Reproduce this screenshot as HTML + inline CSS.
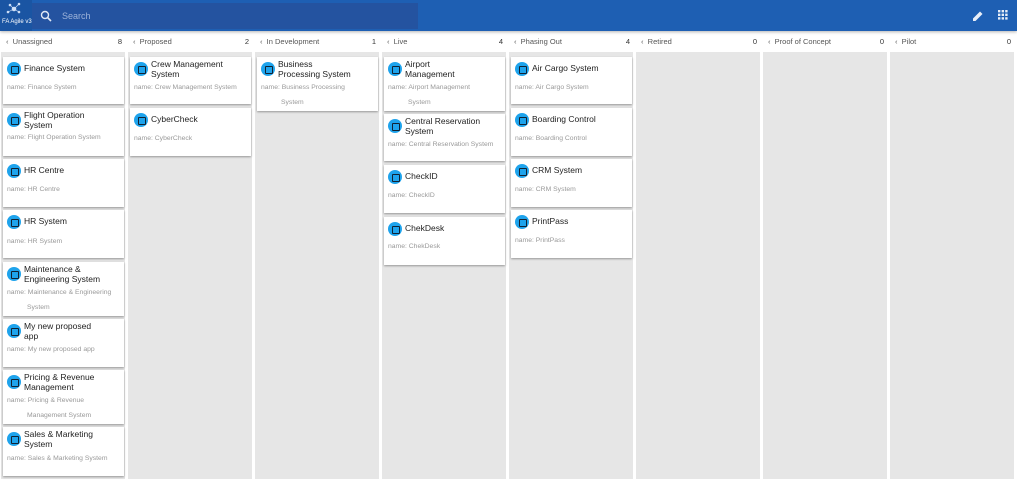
<!DOCTYPE html>
<html><head><meta charset="utf-8"><style>
*{box-sizing:border-box;margin:0;padding:0}
body{width:1017px;height:486px;overflow:hidden;background:#fff;font-family:"Liberation Sans",Arial,sans-serif;position:relative}
.top{position:absolute;left:0;top:0;width:1017px;height:31px;background:#1e5fb3;box-shadow:0 1px 3px rgba(0,0,0,.3)}
.logo{position:absolute;left:0;top:0;width:32px;height:31px;background:#1a55a3}
.search{position:absolute;left:32px;top:3px;width:386px;height:26px;background:#2453a0}
.search span{position:absolute;left:30px;top:8px;font-size:9px;color:#9db3d9}
.hdr{position:absolute;top:32px;height:19px;font-size:7.5px;color:#555;line-height:19px}
.hdr .c{position:absolute;right:2px;top:0;color:#333}
.col{position:absolute;top:52px;width:124px;height:427px;background:#e6e6e6}
.card{position:absolute;left:2px;width:121px;background:#fff;box-shadow:0 1px 2px rgba(0,0,0,.35)}
.ic{position:absolute;left:4px;top:5px;width:14px;height:14px;border-radius:50%;background:#1ea3ec}
.ic:after{content:"";position:absolute;left:3.5px;top:3.5px;width:6px;height:6px;border:1px solid #123;border-radius:1px}
.t{position:absolute;left:21px;top:5px;font-size:8.5px;line-height:10px;color:#222}
.n{position:absolute;left:4px;font-size:6.8px;color:#999;line-height:10px}
.n2{position:absolute;left:24px;font-size:6.8px;color:#999}
</style></head><body>
<div class="top">
<div class="logo"><svg width="32" height="31"><g fill="#cfe0f7" stroke="#cfe0f7" stroke-width=".6"><circle cx="14" cy="9" r="2"/><circle cx="10" cy="5" r="1"/><circle cx="19" cy="4" r="1"/><circle cx="8" cy="12" r="1"/><circle cx="19" cy="12" r="1"/><line x1="14" y1="9" x2="10" y2="5"/><line x1="14" y1="9" x2="19" y2="4"/><line x1="14" y1="9" x2="8" y2="12"/><line x1="14" y1="9" x2="19" y2="12"/></g><text x="2" y="23" font-size="6" fill="#fff" font-family="Liberation Sans">FA Agile v3</text></svg></div>
<div class="search"><svg style="position:absolute;left:8px;top:7px" width="12" height="12"><circle cx="5" cy="5" r="3.5" fill="none" stroke="#e0e8f5" stroke-width="1.4"/><line x1="7.5" y1="7.5" x2="11" y2="11" stroke="#e0e8f5" stroke-width="1.6"/></svg><span>Search</span></div>
<svg style="position:absolute;left:972px;top:10px" width="12" height="12"><path d="M1 11 L1 8.5 L8 1.5 L10.5 4 L3.5 11 Z" fill="#e8eef8"/></svg>
<svg style="position:absolute;left:998px;top:10px" width="10" height="10" fill="#e8eef8"><rect x="0" y="0" width="2.4" height="2.4"/><rect x="3.6" y="0" width="2.4" height="2.4"/><rect x="7.2" y="0" width="2.4" height="2.4"/><rect x="0" y="3.6" width="2.4" height="2.4"/><rect x="3.6" y="3.6" width="2.4" height="2.4"/><rect x="7.2" y="3.6" width="2.4" height="2.4"/><rect x="0" y="7.2" width="2.4" height="2.4"/><rect x="3.6" y="7.2" width="2.4" height="2.4"/><rect x="7.2" y="7.2" width="2.4" height="2.4"/></svg>
</div>

<div class="hdr" style="left:6px;width:118px">‹&nbsp; Unassigned<span class="c">8</span></div>
<div class="hdr" style="left:133px;width:118px">‹&nbsp; Proposed<span class="c">2</span></div>
<div class="hdr" style="left:260px;width:118px">‹&nbsp; In Development<span class="c">1</span></div>
<div class="hdr" style="left:387px;width:118px">‹&nbsp; Live<span class="c">4</span></div>
<div class="hdr" style="left:514px;width:118px">‹&nbsp; Phasing Out<span class="c">4</span></div>
<div class="hdr" style="left:641px;width:118px">‹&nbsp; Retired<span class="c">0</span></div>
<div class="hdr" style="left:768px;width:118px">‹&nbsp; Proof of Concept<span class="c">0</span></div>
<div class="hdr" style="left:895px;width:118px">‹&nbsp; Pilot<span class="c">0</span></div>

<div class="col" style="left:1px">
<div class="card" style="top:5px;height:47px"><div class="ic"></div><div class="t" style="top:6px">Finance System</div><div class="n" style="top:26px">name: Finance System</div></div>
<div class="card" style="top:56px;height:48px"><div class="ic"></div><div class="t" style="top:2px">Flight Operation<br>System</div><div class="n" style="top:25px">name: Flight Operation System</div></div>
<div class="card" style="top:107px;height:48px"><div class="ic"></div><div class="t" style="top:6px">HR Centre</div><div class="n" style="top:26px">name: HR Centre</div></div>
<div class="card" style="top:158px;height:48px"><div class="ic"></div><div class="t" style="top:6px">HR System</div><div class="n" style="top:27px">name: HR System</div></div>
<div class="card" style="top:210px;height:54px"><div class="ic"></div><div class="t" style="top:2px">Maintenance &amp;<br>Engineering System</div><div class="n" style="top:26px">name: Maintenance &amp; Engineering</div><div class="n2" style="top:42px">System</div></div>
<div class="card" style="top:267px;height:48px"><div class="ic"></div><div class="t" style="top:2px">My new proposed<br>app</div><div class="n" style="top:26px">name: My new proposed app</div></div>
<div class="card" style="top:318px;height:54px"><div class="ic"></div><div class="t" style="top:2px">Pricing &amp; Revenue<br>Management</div><div class="n" style="top:26px">name: Pricing &amp; Revenue</div><div class="n2" style="top:42px">Management System</div></div>
<div class="card" style="top:375px;height:49px"><div class="ic"></div><div class="t" style="top:2px">Sales &amp; Marketing<br>System</div><div class="n" style="top:27px">name: Sales &amp; Marketing System</div></div>
</div>

<div class="col" style="left:128px">
<div class="card" style="top:5px;height:47px"><div class="ic"></div><div class="t" style="top:2px">Crew Management<br>System</div><div class="n" style="top:26px">name: Crew Management System</div></div>
<div class="card" style="top:56px;height:48px"><div class="ic"></div><div class="t" style="top:6px">CyberCheck</div><div class="n" style="top:26px">name: CyberCheck</div></div>
</div>

<div class="col" style="left:255px">
<div class="card" style="top:5px;height:54px"><div class="ic"></div><div class="t" style="top:2px">Business<br>Processing System</div><div class="n" style="top:26px">name: Business Processing</div><div class="n2" style="top:42px">System</div></div>
</div>

<div class="col" style="left:382px">
<div class="card" style="top:5px;height:54px"><div class="ic"></div><div class="t" style="top:2px">Airport<br>Management</div><div class="n" style="top:26px">name: Airport Management</div><div class="n2" style="top:42px">System</div></div>
<div class="card" style="top:62px;height:47px"><div class="ic"></div><div class="t" style="top:2px">Central Reservation<br>System</div><div class="n" style="top:26px">name: Central Reservation System</div></div>
<div class="card" style="top:113px;height:48px"><div class="ic"></div><div class="t" style="top:6px">CheckID</div><div class="n" style="top:26px">name: CheckID</div></div>
<div class="card" style="top:165px;height:48px"><div class="ic"></div><div class="t" style="top:6px">ChekDesk</div><div class="n" style="top:25px">name: ChekDesk</div></div>
</div>

<div class="col" style="left:509px">
<div class="card" style="top:5px;height:47px"><div class="ic"></div><div class="t" style="top:6px">Air Cargo System</div><div class="n" style="top:26px">name: Air Cargo System</div></div>
<div class="card" style="top:56px;height:48px"><div class="ic"></div><div class="t" style="top:6px">Boarding Control</div><div class="n" style="top:26px">name: Boarding Control</div></div>
<div class="card" style="top:107px;height:48px"><div class="ic"></div><div class="t" style="top:6px">CRM System</div><div class="n" style="top:26px">name: CRM System</div></div>
<div class="card" style="top:158px;height:48px"><div class="ic"></div><div class="t" style="top:6px">PrintPass</div><div class="n" style="top:26px">name: PrintPass</div></div>
</div>

<div class="col" style="left:636px"></div>
<div class="col" style="left:763px"></div>
<div class="col" style="left:890px"></div>
</body></html>
